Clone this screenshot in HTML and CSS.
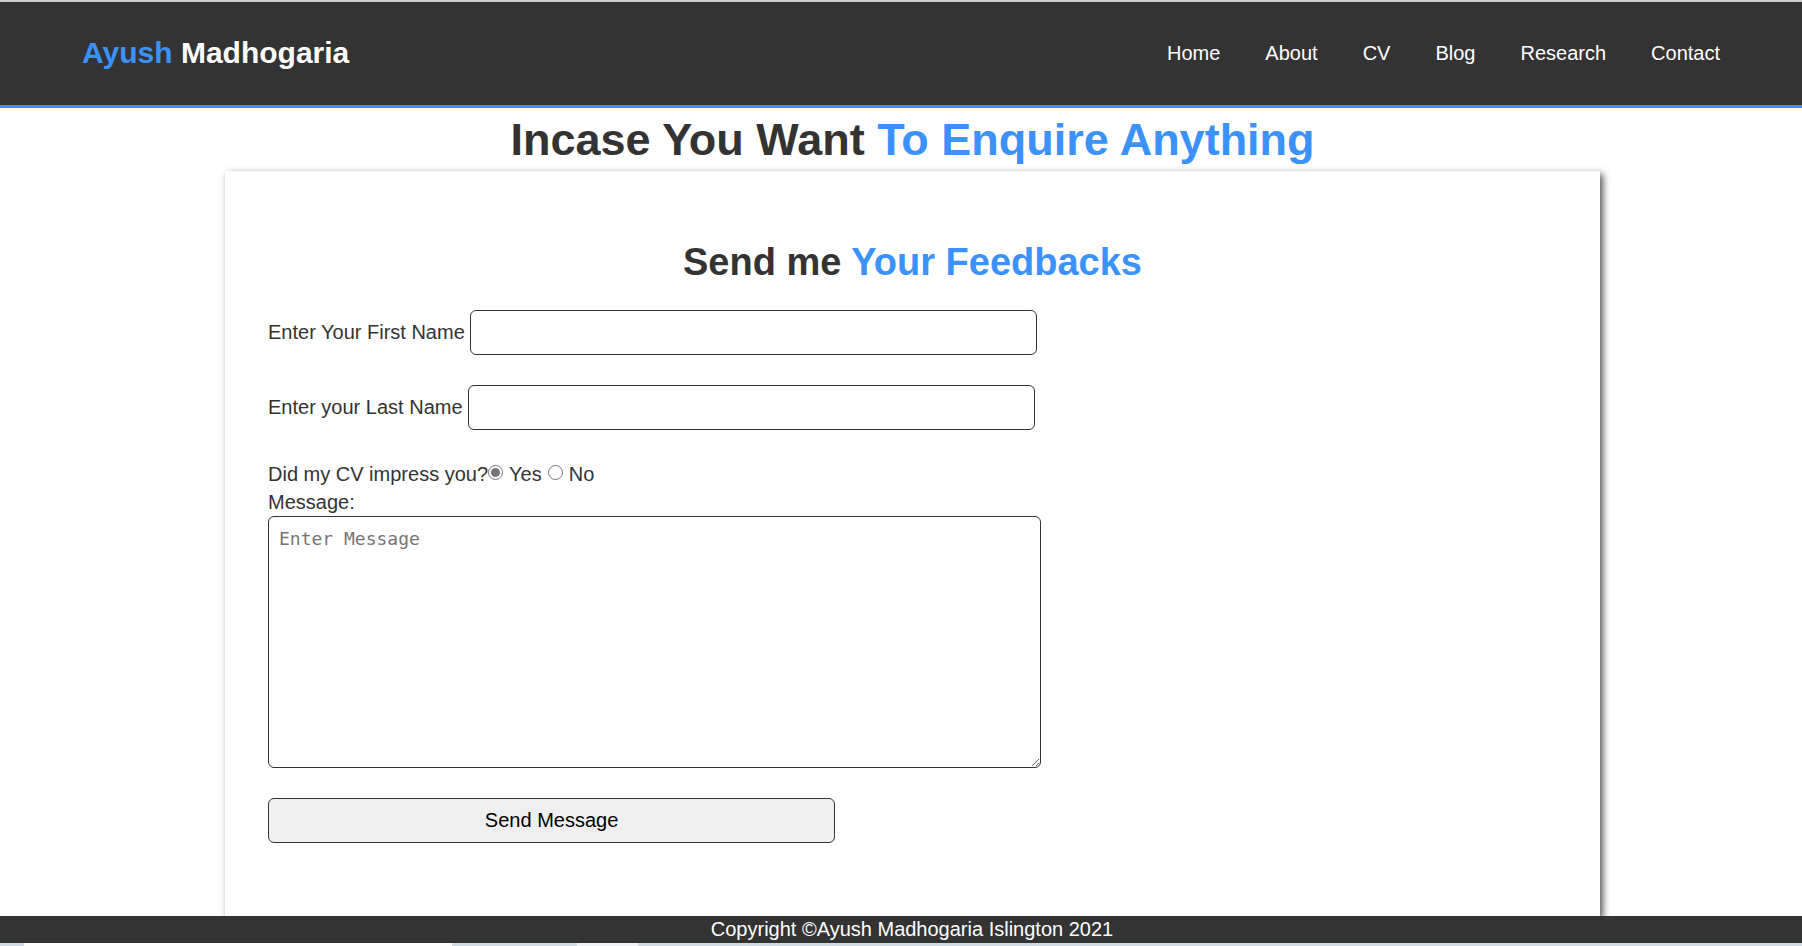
FILE: index.html
```html
<!DOCTYPE html>
<html lang="en">
<head>
<meta charset="utf-8">
<title>Ayush Madhogaria - Contact</title>
<link rel="stylesheet" href="styles.css">
</head>
<body>
<header class="site-header">
  <div class="logo"><span class="highlight">Ayush</span> Madhogaria</div>
  <nav class="site-nav">
    <a href="#">Home</a>
    <a href="#">About</a>
    <a href="#">CV</a>
    <a href="#">Blog</a>
    <a href="#">Research</a>
    <a href="#">Contact</a>
  </nav>
</header>
<main class="content">
  <h1 class="page-title">Incase You Want <span class="highlight">To Enquire Anything</span></h1>
  <section class="panel">
    <h2 class="panel-title">Send me <span class="highlight">Your Feedbacks</span></h2>
    <form class="feedback">
      <div class="field">
        <label for="first-name">Enter Your First Name</label>
        <input class="box" type="text" id="first-name">
      </div>
      <div class="field">
        <label for="last-name">Enter your Last Name</label>
        <input class="box" type="text" id="last-name">
      </div>
      <div class="choices" role="radiogroup" aria-labelledby="cv-question">
        <span id="cv-question">Did my CV impress you?</span>
        <label class="choice"><input type="radio" name="cv" checked>Yes</label>
        <label class="choice"><input type="radio" name="cv">No</label>
      </div>
      <label class="message-label" for="message">Message:</label>
      <textarea class="message" id="message" placeholder="Enter Message"></textarea>
      <button class="box send" type="submit">Send Message</button>
    </form>
  </section>
</main>
<footer class="site-footer">Copyright ©Ayush Madhogaria Islington 2021</footer>
<div class="bottom-strip"></div>
</body>
</html>
```
FILE: styles.css
```css
* {
  box-sizing: border-box;
}

body {
  display: flex;
  flex-direction: column;
  height: 100vh;
  margin: 0;
  overflow: hidden;
  background: #fff;
  color: #333;
  font: 20px/28px "Liberation Sans", Arial, sans-serif;
}

.highlight {
  color: #3b92fd;
}

.site-header {
  display: flex;
  flex: none;
  align-items: center;
  justify-content: space-between;
  height: 108px;
  padding: 0 82px 2px;
  border-top: 2px solid #cdd0d0;
  border-bottom: 3px solid #3e8eea;
  background: #333;
  color: #fff;
}

.logo {
  font-size: 30px;
  font-weight: bold;
}

.site-nav {
  display: flex;
  gap: 45px;
}

.site-nav a {
  color: #fff;
  text-decoration: none;
}

.content {
  display: flex;
  flex: 1;
  flex-direction: column;
  min-height: 0;
  overflow: hidden;
  padding: 0 202px 0 225px;
}

.page-title {
  margin: 0;
  font-size: 45px;
  line-height: 63px;
  text-align: center;
}

.panel {
  flex: 1 0 auto;
  padding: 64px 43px 72px;
  box-shadow: 3px 3px 7px #555;
}

.panel-title {
  margin: 0 0 20px;
  font-size: 38px;
  line-height: 55px;
  text-align: center;
}

.feedback {
  display: flex;
  flex-direction: column;
  align-items: flex-start;
}

.field {
  display: flex;
  align-items: center;
  gap: 5px;
  width: 100%;
  margin-bottom: 30px;
}

.field label {
  padding-bottom: 2px;
}

.box {
  width: 44%;
  height: 45px;
  padding: 8px;
  border: 1px solid #333;
  border-radius: 6px;
  background: #fff;
  font: inherit;
}

.choices {
  display: flex;
  gap: 6px;
}

.choice {
  display: flex;
  align-items: center;
  gap: 6px;
}

.choices span + .choice {
  margin-left: -6px;
}

.choice input {
  width: 15px;
  height: 15px;
  margin: 0 0 3px;
  accent-color: #767676;
}

.message {
  width: 60%;
  height: 252px;
  margin-bottom: 30px;
  padding: 8px 10px;
  border: 1px solid #333;
  border-radius: 6px;
  font: 18px/28px "DejaVu Sans Mono", monospace;
}

.message::placeholder {
  color: #757575;
}

.send {
  padding: 7px 8px 9px;
  background: #efefef;
  color: #000;
}

.site-footer {
  z-index: 1;
  flex: none;
  padding-left: 22px;
  background: #333;
  color: #fff;
  line-height: 27px;
  text-align: center;
}

.bottom-strip {
  flex: none;
  height: 3px;
  background: linear-gradient(90deg, #cddde2 0 24px, #fff 24px 452px, #cddde2 452px 577px, #f1f2f7 577px 638px, #cddde2 638px);
}
```
